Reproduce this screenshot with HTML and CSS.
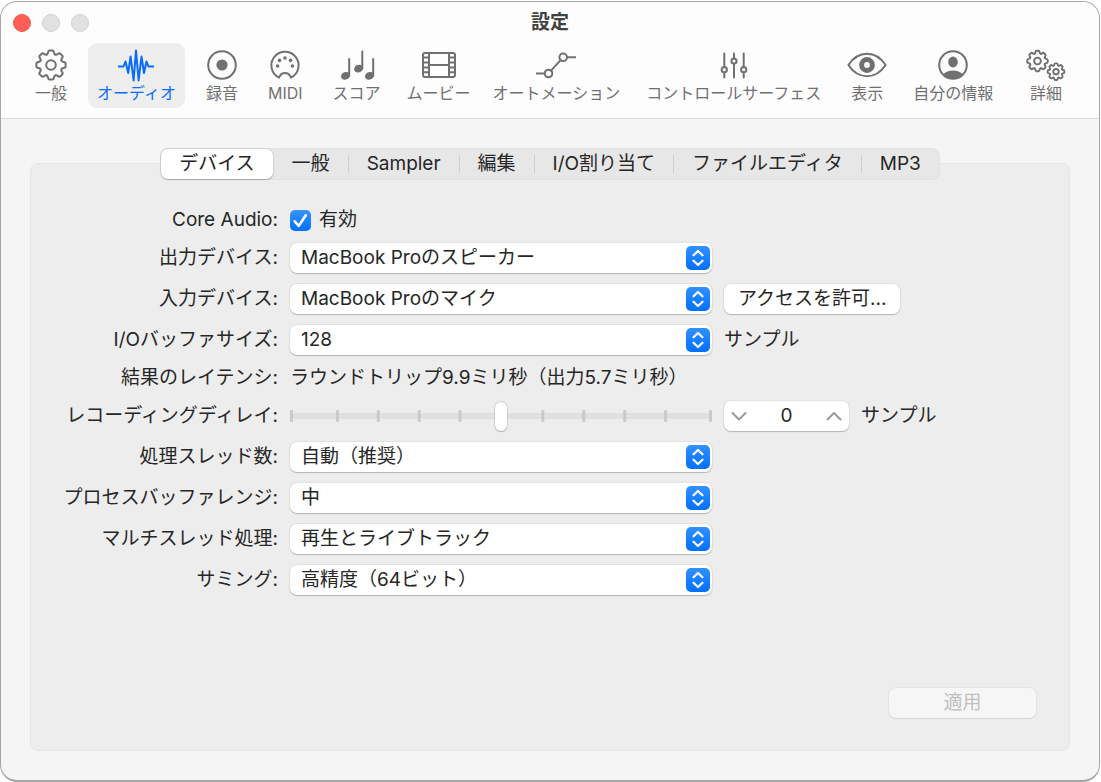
FILE: index.html
```
<!DOCTYPE html>
<html lang="ja">

<head>
  <meta charset="utf-8" />
  <meta name="viewport" content="width=device-width, initial-scale=1" />

  <title>設定</title>

  <link rel="stylesheet" href="styles.css">
</head>

<body>
  <!-- Shapes shared by the gear icons -->
  <svg class="defs" aria-hidden="true">
    <defs>
      <path id="tooth" d="M-4.32-10.44Q-3.2-10.9-3-12.4Q-2.7-14.6-1.4-14.6H1.4Q2.7-14.6 3-12.4Q3.2-10.9 4.32-10.44" />
      <g id="gear">
        <use href="#tooth" />
        <use href="#tooth" transform="rotate(45)" />
        <use href="#tooth" transform="rotate(90)" />
        <use href="#tooth" transform="rotate(135)" />
        <use href="#tooth" transform="rotate(180)" />
        <use href="#tooth" transform="rotate(225)" />
        <use href="#tooth" transform="rotate(270)" />
        <use href="#tooth" transform="rotate(315)" />
        <circle r="4.8" />
      </g>
    </defs>
  </svg>

  <div class="window">
    <header>
      <div class="titlebar">
        <div class="lights">
          <button type="button" class="light close" aria-label="閉じる"></button>
          <button type="button" class="light" aria-label="しまう" disabled></button>
          <button type="button" class="light" aria-label="拡大" disabled></button>
        </div>
        <h1>設定</h1>
      </div>

      <nav class="toolbar">
        <button type="button">
          <svg width="32" height="36" viewBox="0 0 32 36"><use href="#gear" transform="translate(16 17)" /></svg>
          一般
        </button>
        <button type="button" class="selected" aria-current="page">
          <svg width="36" height="36" viewBox="0 0 36 36"><path d="M0 18.5H5.5L7.5 13.5L10.2 25L12.6 8.5L15.6 32.5L18 2.5L20.6 32.5L23.5 8.5L26 25L28.5 13.5L30.5 18.5H36" /></svg>
          オーディオ
        </button>
        <button type="button">
          <svg width="32" height="36" viewBox="0 0 32 36"><circle cx="16" cy="17" r="13.8" /><circle class="fill" cx="16" cy="17" r="5.6" /></svg>
          録音
        </button>
        <button type="button">
          <svg width="32" height="36" viewBox="0 0 32 36">
            <path d="M10 29.6A13.6 13.6 0 1 1 22 29.6L20.8 27.5C19 24 13 24 11.2 27.5Z" />
            <g class="fill"><circle cx="8.6" cy="18" r="1.8" /><circle cx="10.5" cy="12.4" r="1.8" /><circle cx="16" cy="10" r="1.8" /><circle cx="21.5" cy="12.4" r="1.8" /><circle cx="23.4" cy="18" r="1.8" /></g>
          </svg>
          MIDI
        </button>
        <button type="button">
          <svg width="36" height="36" viewBox="0 0 36 36">
            <path d="M10.2 11V27M23.3 3.5V20M34.2 11V27" />
            <g class="fill"><ellipse cx="6.6" cy="27.8" rx="4.7" ry="3.7" transform="rotate(-20 6.6 27.8)" /><ellipse cx="19.7" cy="20.6" rx="4.7" ry="3.7" transform="rotate(-20 19.7 20.6)" /><ellipse cx="30.6" cy="27.8" rx="4.7" ry="3.7" transform="rotate(-20 30.6 27.8)" /></g>
          </svg>
          スコア
        </button>
        <button type="button" class="tight">
          <svg width="36" height="36" viewBox="0 0 36 36"><rect x="2" y="5" width="32" height="24" rx="2" /><path d="M8 5V29M28 5V29M8 17H28M2 9.6H8M2 14.4H8M2 19.4H8M2 24.2H8M28 9.6H34M28 14.4H34M28 19.4H34M28 24.2H34" /></svg>
          ムービー
        </button>
        <button type="button" class="tight">
          <svg width="40" height="36" viewBox="0 0 40 36"><circle cx="12.5" cy="25.5" r="3.8" /><circle cx="27.2" cy="9.3" r="3.8" /><path d="M.5 25.5H8.7M31 9.3H39.5M15 22.7L24.6 12.1" /></svg>
          オートメーション
        </button>
        <button type="button">
          <svg width="36" height="36" viewBox="0 0 36 36"><path d="M8.3 5.5V19M8.3 24.4V29.5M18 5.5V10.3M18 15.7V29.5M27.7 5.5V19M27.7 24.4V29.5" /><circle cx="8.3" cy="21.7" r="2.6" /><circle cx="18" cy="13" r="2.6" /><circle cx="27.7" cy="21.7" r="2.6" /></svg>
          コントロールサーフェス
        </button>
        <button type="button">
          <svg width="40" height="36" viewBox="0 0 40 36"><path d="M1.4 17C6 10 12.5 5.8 20 5.8S34 10 38.6 17C34 24 27.5 28.2 20 28.2S6 24 1.4 17Z" /><circle cx="20" cy="17" r="5.4" stroke-width="5" /></svg>
          表示
        </button>
        <button type="button">
          <svg width="36" height="36" viewBox="0 0 36 36"><circle cx="18" cy="17" r="13.8" /><ellipse class="fill" cx="18" cy="14" rx="4.8" ry="5.4" /><path class="fill" d="M8 26.5C10.5 23.6 14 22.4 18 22.4S25.5 23.6 28 26.5A13.8 13.8 0 0 1 8 26.5Z" /></svg>
          自分の情報
        </button>
        <button type="button">
          <svg width="40" height="36" viewBox="0 0 40 36"><use href="#gear" transform="translate(11.5 13) scale(.7)" stroke-width="2.8" /><use href="#gear" transform="translate(30 23.7) scale(.57)" stroke-width="3.2" /></svg>
          詳細
        </button>
      </nav>
    </header>

    <main>
      <div class="tabs" role="tablist">
        <button type="button" role="tab" aria-selected="true">デバイス</button>
        <button type="button" role="tab">一般</button>
        <button type="button" role="tab">Sampler</button>
        <button type="button" role="tab">編集</button>
        <button type="button" role="tab">I/O割り当て</button>
        <button type="button" role="tab">ファイルエディタ</button>
        <button type="button" role="tab">MP3</button>
      </div>

      <form class="panel">
        <div class="fields">
          <label class="label" for="enabled">Core Audio:</label>
          <label class="check"><input id="enabled" type="checkbox" checked /> 有効</label>

          <label class="label" for="output">出力デバイス:</label>
          <select id="output"><option>MacBook Proのスピーカー</option></select>

          <label class="label" for="input">入力デバイス:</label>
          <select id="input"><option>MacBook Proのマイク</option></select>
          <button type="button" class="push">アクセスを許可...</button>

          <label class="label" for="buffer">I/Oバッファサイズ:</label>
          <select id="buffer"><option>128</option></select>
          <span>サンプル</span>

          <span class="label">結果のレイテンシ:</span>
          <output class="latency">ラウンドトリップ9.9ミリ秒（出力5.7ミリ秒）</output>

          <label class="label" for="delay">レコーディングディレイ:</label>
          <input id="delay" class="slider" type="range" min="-5000" max="5000" value="0" />
          <div class="amount">
            <div class="stepper">
              <button type="button" aria-label="減らす"><svg width="16" height="10" viewBox="0 0 16 10"><path d="M1.5 2L8 8.5L14.5 2" /></svg></button>
              <input type="text" value="0" aria-label="レコーディングディレイ" />
              <button type="button" aria-label="増やす"><svg width="16" height="10" viewBox="0 0 16 10"><path d="M1.5 8.5L8 2L14.5 8.5" /></svg></button>
            </div>
            <span>サンプル</span>
          </div>

          <label class="label" for="threads">処理スレッド数:</label>
          <select id="threads"><option>自動（推奨）</option></select>

          <label class="label" for="range">プロセスバッファレンジ:</label>
          <select id="range"><option>中</option></select>

          <label class="label" for="multi">マルチスレッド処理:</label>
          <select id="multi"><option>再生とライブトラック</option></select>

          <label class="label" for="summing">サミング:</label>
          <select id="summing"><option>高精度（64ビット）</option></select>
        </div>

        <button type="submit" class="push apply" disabled>適用</button>
      </form>
    </main>
  </div>
</body>

</html>
```
FILE: styles.css
```
* {
  box-sizing: border-box;
}

body {
  margin: 0;
  padding: 1px 1px 0 0;
  background: #fff;
  color: #262626;
  font-family: Inter, "Noto Sans CJK JP", sans-serif;
  font-size: 19px;
  line-height: 24px;
}

button,
input,
select {
  margin: 0;
  padding: 0;
  border: 0;
  background: none;
  color: inherit;
  font: inherit;
}

svg {
  fill: none;
  stroke: currentColor;
  stroke-width: 2;
  stroke-linejoin: round;
  stroke-linecap: round;
}

.fill {
  fill: currentColor;
  stroke: none;
}

.defs {
  position: absolute;
  width: 0;
  height: 0;
}

.window {
  display: flex;
  flex-direction: column;
  min-height: calc(100vh - 1px);
  border: 1px solid #a6a6a6;
  border-width: 1px 1px 2px;
  border-radius: 17px;
  background: #f5f5f5;
  overflow: hidden;
}

/* Title bar and toolbar */

header {
  padding-bottom: 10px;
  border-bottom: 1px solid #d9d9d9;
  background: #fdfdfd;
}

.titlebar {
  display: grid;
  grid-template-columns: 1fr auto 1fr;
  align-items: center;
  height: 41px;
  padding: 0 12px;
}

.lights {
  display: flex;
  gap: 11px;
}

.light {
  width: 18px;
  height: 18px;
  border: 1px solid #d0d0d0;
  border-radius: 50%;
  background: #e1e1e1;
}

.light.close {
  border-color: #f25850;
  background: #ff5f57;
}

h1 {
  margin: 0;
  color: #404040;
  font-size: 19px;
  font-weight: 700;
  line-height: 24px;
}

.toolbar {
  display: flex;
  gap: 12px;
  padding: 0 28px 0 25px;
}

.toolbar button {
  display: flex;
  flex-direction: column;
  align-items: center;
  padding: 5px 9px;
  border-radius: 9px;
  color: #707070;
  font-size: 16px;
  line-height: 20px;
  white-space: nowrap;
}

.toolbar .tight {
  padding: 5px;
}

.toolbar button:last-child {
  margin-left: auto;
}

/* Icons may be wider than the label below them */
.toolbar svg {
  margin: 0 -4px -1px;
}

.toolbar .selected {
  background: #eee;
  color: #0a6cff;
}

/* Tabs lie over the top edge of the panel */

main {
  flex: 1;
  display: flex;
  flex-direction: column;
  padding: 29px;
}

.tabs {
  z-index: 1;
  align-self: center;
  display: flex;
  margin-bottom: -17px;
  border: 1px solid #e2e2e2;
  border-radius: 8px;
  background: #e7e7e7;
}

.tabs button {
  display: flex;
  align-items: center;
  height: 30px;
  white-space: nowrap;
}

.tabs button::before {
  content: "";
  width: 1px;
  height: 18px;
  margin-right: 18px;
  background: #cfcfcf;
}

.tabs button::after {
  content: "";
  width: 18px;
}

.tabs [aria-selected="true"] {
  border-radius: 7px;
  background: #fff;
  box-shadow: 0 0 1px 1px rgba(0, 0, 0, .08), 0 1px 1px rgba(0, 0, 0, .2);
}

.tabs [aria-selected="true"]::before,
.tabs [aria-selected="true"] + button::before {
  background: none;
}

.tabs button:first-child::before {
  width: 0;
}

.panel {
  flex: 1;
  display: flex;
  flex-direction: column;
  justify-content: space-between;
  gap: 30px;
  padding: 44px 33px 32px;
  border: 1px solid #e5e5e5;
  border-radius: 8px;
  background: #ededed;
}

.fields {
  display: grid;
  grid-template-columns: 214px minmax(200px, 422px) auto;
  justify-content: start;
  align-items: center;
  gap: 11px 12px;
}

.label {
  grid-column: 1;
  justify-self: end;
  white-space: nowrap;
}

.check {
  display: flex;
  align-items: center;
  gap: 8px;
}

.check input {
  appearance: none;
  width: 21px;
  height: 21px;
  border-radius: 5px;
  background: #d0d0d0;
}

.check input:checked {
  background: url("data:image/svg+xml,%3Csvg xmlns='http://www.w3.org/2000/svg' viewBox='0 0 21 21'%3E%3Cpath d='M4.7 11.3L8.8 15.8L15.8 5.3' fill='none' stroke='white' stroke-width='2.6' stroke-linecap='round' stroke-linejoin='round'/%3E%3C/svg%3E"), linear-gradient(#3a94ff, #0070fb);
}

select,
.push,
.stepper {
  height: 30px;
  border-radius: 7px;
  background: #fff;
  box-shadow: 0 0 1px 1px rgba(0, 0, 0, .05), 0 1px 1px rgba(0, 0, 0, .2);
}

select {
  appearance: none;
  width: 100%;
  padding: 0 36px 0 11px;
  background-image:
    url("data:image/svg+xml,%3Csvg xmlns='http://www.w3.org/2000/svg' viewBox='0 0 24 24'%3E%3Cpath d='M7.5 9.3L12 5L16.5 9.3M7.5 14.7L12 19L16.5 14.7' fill='none' stroke='white' stroke-width='2.2' stroke-linecap='round' stroke-linejoin='round'/%3E%3C/svg%3E"),
    url("data:image/svg+xml,%3Csvg xmlns='http://www.w3.org/2000/svg' viewBox='0 0 24 24'%3E%3ClinearGradient id='g' x2='0' y2='1'%3E%3Cstop stop-color='%233291ff'/%3E%3Cstop offset='1' stop-color='%230070fb'/%3E%3C/linearGradient%3E%3Crect width='24' height='24' rx='5' fill='url(%23g)'/%3E%3C/svg%3E");
  background-repeat: no-repeat;
  background-position: right 2px center;
  background-size: 24px 24px;
}

.push {
  justify-self: start;
  padding: 0 14px;
  white-space: nowrap;
}

.latency {
  grid-column: 2 / 4;
  white-space: nowrap;
}

/* Recording delay */

.slider {
  appearance: none;
  width: 100%;
  height: 30px;
  background: url("data:image/svg+xml,%3Csvg xmlns='http://www.w3.org/2000/svg' viewBox='0 0 423 12' preserveAspectRatio='none'%3E%3Crect x='1' y='3' width='421' height='6' rx='2' fill='%23e0e0e0'/%3E%3Cg fill='%23cacaca'%3E%3Crect width='3' height='12' rx='1'/%3E%3Crect x='46' width='3' height='12' rx='1'/%3E%3Crect x='87' width='3' height='12' rx='1'/%3E%3Crect x='128' width='3' height='12' rx='1'/%3E%3Crect x='169' width='3' height='12' rx='1'/%3E%3Crect x='252' width='3' height='12' rx='1'/%3E%3Crect x='293' width='3' height='12' rx='1'/%3E%3Crect x='334' width='3' height='12' rx='1'/%3E%3Crect x='375' width='3' height='12' rx='1'/%3E%3Crect x='420' width='3' height='12' rx='1'/%3E%3C/g%3E%3C/svg%3E") center / 100% 12px no-repeat;
}

.slider::-webkit-slider-thumb {
  appearance: none;
  width: 12px;
  height: 29px;
  border-radius: 6px;
  background: #fff;
  box-shadow: 0 0 1px 1px rgba(0, 0, 0, .1), 0 1px 1px rgba(0, 0, 0, .2);
}

.amount {
  display: flex;
  align-items: center;
  gap: 12px;
}

.stepper {
  display: flex;
  width: 125px;
}

.stepper button {
  display: flex;
  align-items: center;
  justify-content: center;
  width: 30px;
  color: #999;
}

.stepper input {
  flex: 1;
  min-width: 0;
  text-align: center;
}

.apply {
  align-self: end;
  width: 147px;
}

.apply:disabled {
  background: #f6f6f6;
  box-shadow: 0 0 1px 1px rgba(0, 0, 0, .04), 0 1px 1px rgba(0, 0, 0, .06);
  color: #bfbfbf;
}
```
